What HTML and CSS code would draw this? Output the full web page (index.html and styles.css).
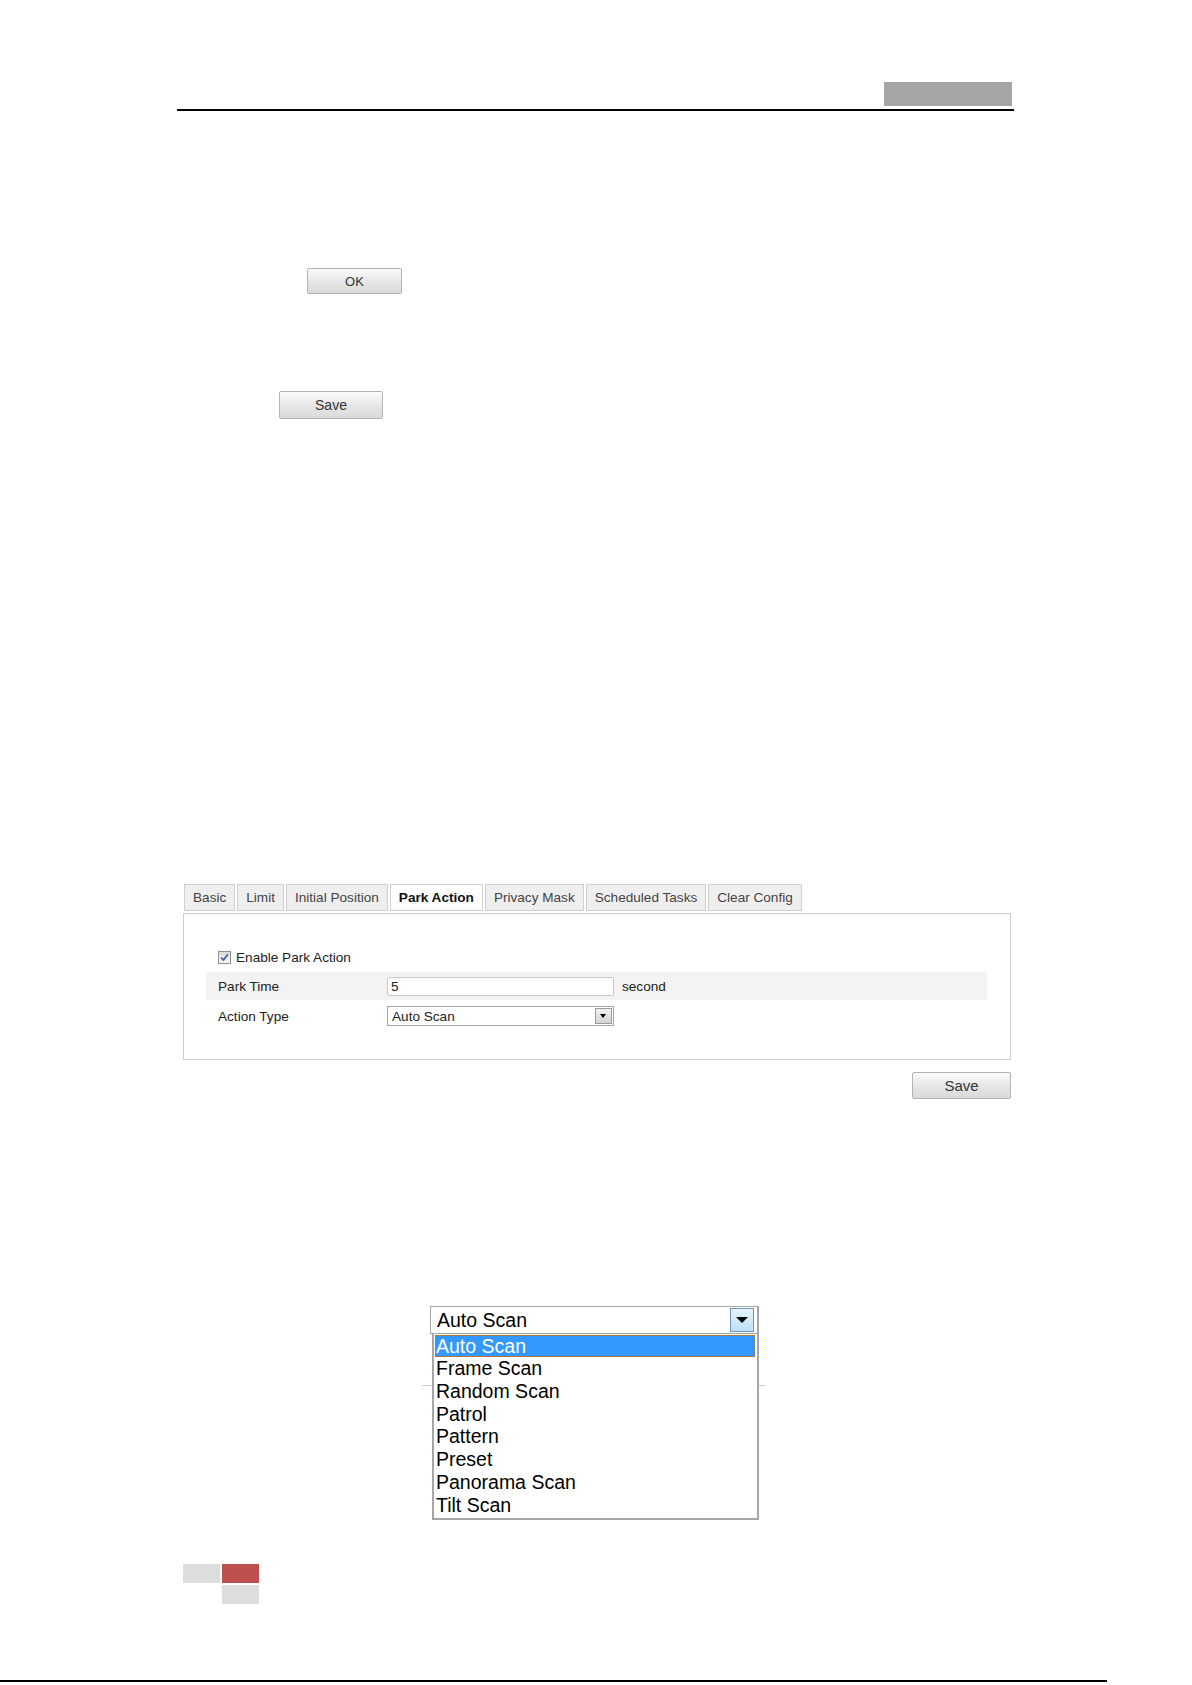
FILE: index.html
```html
<!DOCTYPE html>
<html lang="en">
<head>
  <meta charset="UTF-8" />
  <title>Park Action</title>
  <link rel="stylesheet" href="styles.css">
</head>
<body>
  <div class="page">

    <div class="header">
      <div class="header-tag"></div>
    </div>

    <div class="ok-row">
      <button class="btn btn-ok">OK</button>
    </div>

    <div class="save-row">
      <button class="btn btn-save">Save</button>
    </div>

    <div class="config">
      <div class="tabs">
        <div class="tab">Basic</div>
        <div class="tab">Limit</div>
        <div class="tab">Initial Position</div>
        <div class="tab active">Park Action</div>
        <div class="tab">Privacy Mask</div>
        <div class="tab">Scheduled Tasks</div>
        <div class="tab">Clear Config</div>
      </div>

      <div class="panel">
        <div class="check-row">
          <span class="checkbox">
            <svg width="9" height="9" viewBox="0 0 9 9"><path d="M1.2 4.6 L3.5 7 L7.8 1.3" fill="none" stroke="#3a5e9c" stroke-width="1.6"/></svg>
          </span>
          <span>Enable Park Action</span>
        </div>
        <div class="field-row shaded">
          <span class="field-label">Park Time</span>
          <span class="text-input">5</span>
          <span class="unit">second</span>
        </div>
        <div class="field-row">
          <span class="field-label">Action Type</span>
          <span class="select-box">
            <span>Auto Scan</span>
            <span class="select-arrow"></span>
          </span>
        </div>
      </div>

      <div class="save-bar">
        <button class="btn btn-save-big">Save</button>
      </div>
    </div>

    <div class="dropdown">
      <div class="bg-line"></div>
      <div class="dropdown-head">
        <span>Auto Scan</span>
        <span class="dropdown-arrow"></span>
      </div>
      <ul class="dropdown-list">
        <li class="selected">Auto Scan</li>
        <li>Frame Scan</li>
        <li>Random Scan</li>
        <li>Patrol</li>
        <li>Pattern</li>
        <li>Preset</li>
        <li>Panorama Scan</li>
        <li>Tilt Scan</li>
      </ul>
    </div>

    <div class="footer-mark">
      <div class="mark-row">
        <span class="mark gray"></span>
        <span class="mark red"></span>
      </div>
      <div class="mark-row">
        <span class="mark blank"></span>
        <span class="mark gray"></span>
      </div>
    </div>

  </div>
  <div class="bottom-line"></div>
</body>
</html>
```

FILE: styles.css
```css
html, body {
  margin: 0;
  padding: 0;
  background: #fff;
  font-family: 'Liberation Sans', Arial, sans-serif;
  color: #222;
}

.page {
  width: 837px;
  padding-left: 177px;
}

/* header */
.header {
  padding-top: 82px;
  display: flex;
  justify-content: flex-end;
  border-bottom: 2px solid #000;
  padding-bottom: 3px;
}

.header-tag {
  width: 128px;
  height: 24px;
  margin-right: 2px;
  background: #a6a6a6;
}

/* generic buttons */
.btn {
  display: block;
  padding: 0;
  border: 1px solid #b3b3b3;
  border-radius: 2px;
  background: linear-gradient(#fbfbfb, #e6e6e6 55%, #dadada);
  color: #333;
  font-family: 'Liberation Sans', Arial, sans-serif;
  cursor: pointer;
}

.ok-row {
  margin-top: 157px;
  padding-left: 130px;
}

.btn-ok {
  width: 95px;
  height: 26px;
  font-size: 13px;
}

.save-row {
  margin-top: 97px;
  padding-left: 102px;
}

.btn-save {
  width: 104px;
  height: 28px;
  font-size: 14px;
}

/* config block */
.config {
  margin-top: 465px;
  margin-left: 6px;
  width: 828px;
}

.tabs {
  display: flex;
  gap: 2px;
  padding-left: 1px;
}

.tab {
  height: 25px;
  line-height: 25px;
  padding: 0 8px;
  border: 1px solid #cfcfcf;
  background: #efefef;
  color: #444;
  font-size: 13.6px;
}

.tab.active {
  background: #fff;
  color: #111;
  font-weight: bold;
}

.panel {
  margin-top: 2px;
  border: 1px solid #cfcfcf;
  padding: 33px 23px 30px 22px;
  font-size: 13.6px;
}

.check-row {
  display: flex;
  align-items: center;
  gap: 5px;
  height: 20px;
  padding-left: 12px;
}

.checkbox {
  width: 11px;
  height: 11px;
  border: 1px solid #8e8f8f;
  background: linear-gradient(#dcdcdc, #f6f6f6);
  display: flex;
  align-items: center;
  justify-content: center;
}

.field-row {
  display: flex;
  align-items: center;
  height: 26px;
  margin-top: 3px;
  padding-left: 12px;
}

.field-row.shaded {
  height: 28px;
  margin-top: 5px;
  background: #f3f3f3;
}

.field-label {
  width: 169px;
}

.text-input {
  width: 222px;
  height: 17px;
  line-height: 17px;
  padding-left: 3px;
  border: 1px solid #c8c8c8;
  border-radius: 2px;
  background: #fff;
}

.unit {
  margin-left: 8px;
}

.select-box {
  width: 221px;
  height: 18px;
  padding-left: 4px;
  border: 1px solid #a5a5a5;
  background: #fff;
  display: flex;
  align-items: center;
  justify-content: space-between;
}

.select-arrow {
  width: 15px;
  height: 14px;
  margin-right: 1px;
  border: 1px solid #9c9c9c;
  background: linear-gradient(#f2f2f2, #d4d4d4);
  position: relative;
}

.select-arrow::after {
  content: '';
  position: absolute;
  left: 4px;
  top: 5px;
  border-left: 3.5px solid transparent;
  border-right: 3.5px solid transparent;
  border-top: 4px solid #000;
}

.save-bar {
  display: flex;
  justify-content: flex-end;
  margin-top: 12px;
}

.btn-save-big {
  width: 99px;
  height: 27px;
  font-size: 15px;
}

/* expanded dropdown */
.dropdown {
  position: relative;
  margin-top: 207px;
  margin-left: 253px;
  width: 329px;
}

.bg-line {
  position: absolute;
  left: -8px;
  right: -6px;
  top: 79px;
  height: 1px;
  background: #c9c9c9;
}

.dropdown-head {
  height: 26px;
  border: 1px solid #a3a7ab;
  border-width: 1px 2px 1px 1px;
  padding-left: 6px;
  display: flex;
  align-items: center;
  justify-content: space-between;
  font-size: 19.5px;
  color: #000;
  background: #fff;
}

.dropdown-arrow {
  width: 22px;
  height: 22px;
  margin-right: 3px;
  border: 1px solid #6f95b8;
  background: linear-gradient(#e6f3fc, #bfe0f7);
  position: relative;
}

.dropdown-arrow::after {
  content: '';
  position: absolute;
  left: 5px;
  top: 8px;
  border-left: 6px solid transparent;
  border-right: 6px solid transparent;
  border-top: 6px solid #000;
}

.dropdown-list {
  position: relative;
  list-style: none;
  margin: 0 0 0 2px;
  padding: 1px 2px 1px 1px;
  width: 320px;
  border: 2px solid #a3a7ab;
  border-top: none;
  background: #fff;
  font-size: 19.5px;
  color: #000;
}

.dropdown-list li {
  height: 22.8px;
  line-height: 22.8px;
  padding-left: 1px;
}

.dropdown-list li.selected {
  background: #3399ff;
  color: #fff;
  height: 22px;
  line-height: 22px;
  outline: 1px dotted #b07030;
  outline-offset: -1px;
}

/* footer mark */
.footer-mark {
  margin-top: 44px;
  margin-left: 6px;
  display: flex;
  flex-direction: column;
  gap: 2px;
}

.mark-row {
  display: flex;
  gap: 2px;
}

.mark {
  width: 37px;
  height: 19px;
}

.mark.gray { background: #dddddd; }
.mark.red { background: #c0504d; }

.bottom-line {
  margin-top: 76px;
  width: 1107px;
  height: 2px;
  background: #000;
}
```
